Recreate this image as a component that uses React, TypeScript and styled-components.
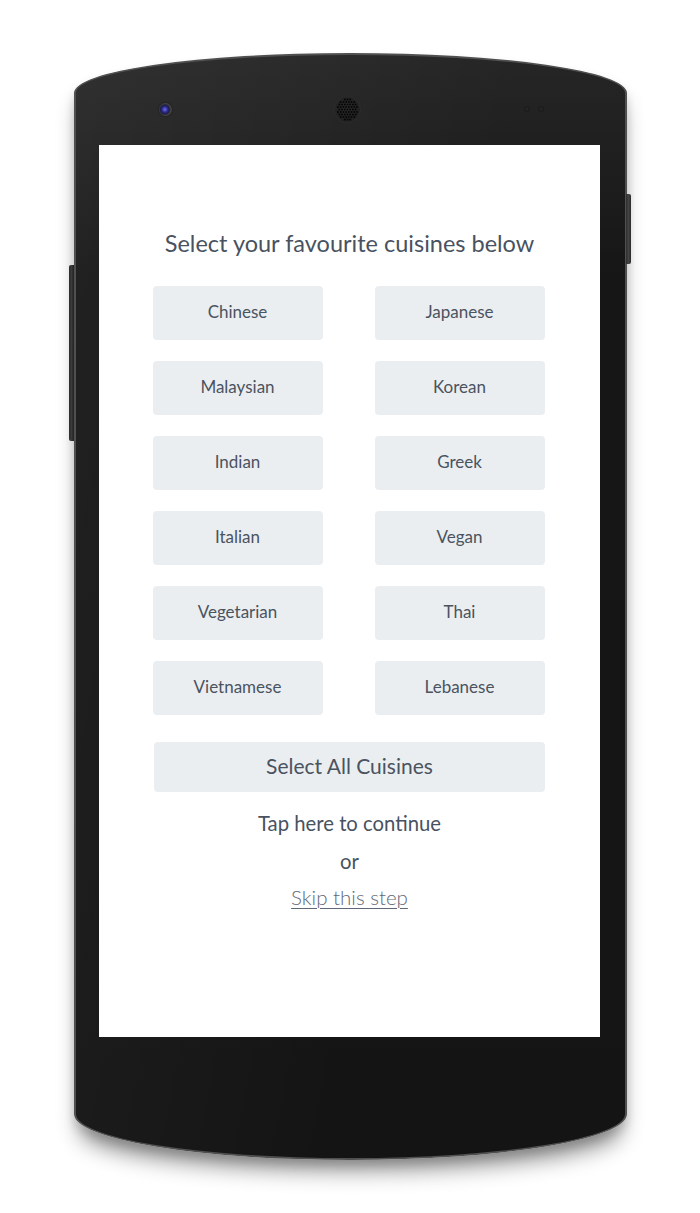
import React from "react";
import styled, { createGlobalStyle } from "styled-components";

const Global = createGlobalStyle`
  html, body { margin: 0; padding: 0; background: #ffffff; }
  body { font-family: Lato, "Open Sans", "Liberation Sans", sans-serif; }
  * { box-sizing: border-box; }
`;

const Page = styled.div`
  width: 700px;
  height: 1213px;
  padding-top: 53px;
  display: flex;
  justify-content: center;
  align-items: flex-start;
  overflow: hidden;
`;

const SideKey = styled.div<{ $top: number; $height: number; $side: "left" | "right" }>`
  width: 5px;
  height: ${(p) => p.$height}px;
  margin-top: ${(p) => p.$top}px;
  background: linear-gradient(90deg, #2e2e2e, #444444 50%, #2a2a2a);
  border-radius: ${(p) => (p.$side === "left" ? "2px 0 0 2px" : "0 2px 2px 0")};
  ${(p) => (p.$side === "right" ? "margin-left: -1px;" : "")}
`;

const Body = styled.div`
  width: 553px;
  height: 1107px;
  border: 2px solid #505050;
  border-radius: 276px 276px 276px 276px / 40px 40px 46px 46px;
  background:
    linear-gradient(100deg, rgba(255, 255, 255, 0.05) 0%, rgba(255, 255, 255, 0) 60%),
    linear-gradient(180deg, #262626 0%, #1f1f1f 9%, #161616 20%, #141414 100%);
  box-shadow: 0 16px 22px -6px rgba(0, 0, 0, 0.45), 0 6px 10px rgba(0, 0, 0, 0.12);
  padding: 0 25px 0 23px;
  display: flex;
  flex-direction: column;
`;

const TopBezel = styled.div`
  height: 90px;
  display: flex;
  align-items: center;
  padding: 18px 0 0 60px;
`;

const Camera = styled.div`
  width: 13px;
  height: 13px;
  border-radius: 50%;
  background: radial-gradient(circle at 45% 50%, #7070e0 0%, #2c2c96 28%, #1d1d40 46%, #454545 62%, #2c2c2c 100%);
  box-shadow: 0 0 2px rgba(0, 0, 0, 0.6);
`;

const Speaker = styled.svg`
  margin-left: 162px;
  width: 27px;
  height: 27px;
`;

const Sensor = styled.div<{ $gap: number }>`
  width: 6px;
  height: 6px;
  border-radius: 50%;
  margin-left: ${(p) => p.$gap}px;
  background: radial-gradient(circle, #2c2826 0%, #1a1a1a 70%);
`;

const Screen = styled.div`
  width: 501px;
  height: 892px;
  background: #ffffff;
  display: flex;
  flex-direction: column;
  align-items: center;
  padding-top: 84px;
  color: #485260;
`;

const Title = styled.h1`
  margin: 0;
  font-size: 23.5px;
  line-height: 28px;
  font-weight: 400;
  color: #485260;
`;

const Grid = styled.div`
  margin-top: 29px;
  display: grid;
  grid-template-columns: 170px 170px;
  grid-auto-rows: 54px;
  column-gap: 52px;
  row-gap: 21px;
  margin-left: -2px;
`;

const Choice = styled.button`
  border: none;
  border-radius: 4px;
  background: #ebeef1;
  font-family: Lato, "Open Sans", "Liberation Sans", sans-serif;
  font-size: 17px;
  line-height: 20px;
  color: #4a5360;
  padding: 0 0 2px;
  cursor: pointer;
`;

const SelectAll = styled(Choice)`
  margin-top: 27px;
  width: 391px;
  height: 50px;
  font-size: 21px;
  line-height: 24px;
`;

const Line = styled.div<{ $gap: number }>`
  margin-top: ${(p) => p.$gap}px;
  font-size: 20.3px;
  line-height: 28px;
  color: #485260;
`;

const Skip = styled.a`
  margin-top: 8px;
  font-size: 20.5px;
  line-height: 28px;
  font-weight: 300;
  color: #5e6876;
  text-decoration: underline;
  text-underline-offset: 3px;
  text-decoration-thickness: 1px;
  cursor: pointer;
`;

const cuisines = [
  "Chinese", "Japanese",
  "Malaysian", "Korean",
  "Indian", "Greek",
  "Italian", "Vegan",
  "Vegetarian", "Thai",
  "Vietnamese", "Lebanese",
];

const speakerDots: { x: number; y: number }[] = [];
for (let i = -4; i <= 4; i++) {
  for (let j = -4; j <= 4; j++) {
    const x = 13.5 + i * 2.7 + (j % 2 === 0 ? 0 : 1.35);
    const y = 13.5 + j * 2.5;
    if ((x - 13.5) ** 2 + (y - 13.5) ** 2 <= 10.5 * 10.5) speakerDots.push({ x, y });
  }
}

export default function App() {
  return (
    <>
      <Global />
      <Page>
        <SideKey $side="left" $top={212} $height={176} />
        <Body>
          <TopBezel>
            <Camera />
            <Speaker viewBox="0 0 27 27">
              <defs>
                <radialGradient id="spk" cx="50%" cy="45%" r="55%">
                  <stop offset="0%" stopColor="#2c2c2c" />
                  <stop offset="100%" stopColor="#1f1f1f" />
                </radialGradient>
              </defs>
              <circle cx="13.5" cy="13.5" r="13" fill="url(#spk)" stroke="#2e2e2e" strokeWidth="0.8" />
              {speakerDots.map((d, k) => (
                <circle key={k} cx={d.x} cy={d.y} r="0.95" fill="#050505" />
              ))}
            </Speaker>
            <Sensor $gap={163} />
            <Sensor $gap={8} />
          </TopBezel>
          <Screen>
            <Title>Select your favourite cuisines below</Title>
            <Grid>
              {cuisines.map((c) => (
                <Choice key={c}>{c}</Choice>
              ))}
            </Grid>
            <SelectAll>Select All Cuisines</SelectAll>
            <Line $gap={17}>Tap here to continue</Line>
            <Line $gap={10}>or</Line>
            <Skip>Skip this step</Skip>
          </Screen>
        </Body>
        <SideKey $side="right" $top={141} $height={70} />
      </Page>
    </>
  );
}
